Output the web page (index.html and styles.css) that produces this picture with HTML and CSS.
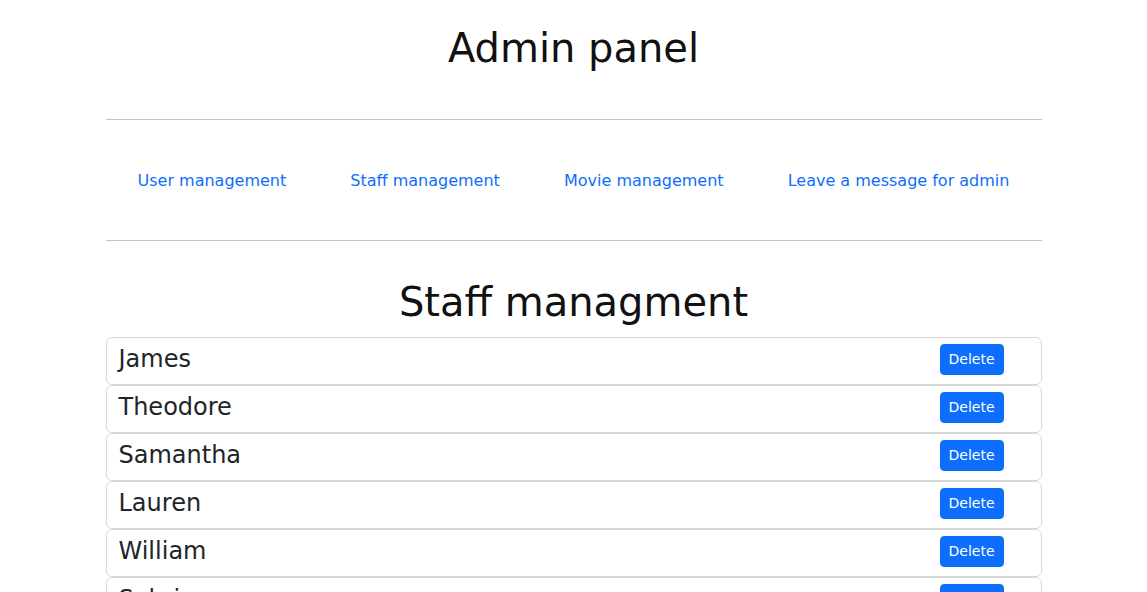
FILE: index.html
```html
<!DOCTYPE html>
<html lang="en">
<head>
<meta charset="utf-8">
<title>Admin panel</title>
<link rel="stylesheet" href="styles.css">
</head>
<body>
<div class="container">
  <h1 class="page-title">Admin panel</h1>
  <hr class="divider">
  <nav class="admin-nav">
    <a href="#" class="nav-link">User management</a>
    <a href="#" class="nav-link">Staff management</a>
    <a href="#" class="nav-link">Movie management</a>
    <a href="#" class="nav-link">Leave a message for admin</a>
  </nav>
  <hr class="divider">
  <h1 class="section-title">Staff managment</h1>
  <ul class="staff-list">
    <li class="staff-item"><h4 class="staff-name">James</h4><button class="btn-delete">Delete</button></li>
    <li class="staff-item"><h4 class="staff-name">Theodore</h4><button class="btn-delete">Delete</button></li>
    <li class="staff-item"><h4 class="staff-name">Samantha</h4><button class="btn-delete">Delete</button></li>
    <li class="staff-item"><h4 class="staff-name">Lauren</h4><button class="btn-delete">Delete</button></li>
    <li class="staff-item"><h4 class="staff-name">William</h4><button class="btn-delete">Delete</button></li>
    <li class="staff-item"><h4 class="staff-name">Sabrina</h4><button class="btn-delete">Delete</button></li>
    <li class="staff-item"><h4 class="staff-name">Oliver</h4><button class="btn-delete">Delete</button></li>
  </ul>
</div>
</body>
</html>
```

FILE: styles.css
```css
* { box-sizing: border-box; }
html, body {
  margin: 0;
  padding: 0;
  background: #fff;
}
body {
  font-family: "DejaVu Sans", sans-serif;
  font-size: 16px;
  line-height: 1.5;
  color: #212529;
}
.container {
  width: 960px;
  margin: 0 auto;
  padding: 24px 12px 0;
}
.page-title,
.section-title {
  margin: 0;
  font-size: 40px;
  font-weight: 500;
  line-height: 1.2;
  text-align: center;
  color: #111;
}
.divider {
  margin: 0;
  border: 0;
  border-top: 1px solid #c4c4c4;
}
.page-title { margin-bottom: 47px; }
.admin-nav {
  display: flex;
  justify-content: space-around;
  align-items: center;
  height: 120px;
  padding-top: 2px;
}
.nav-link {
  color: #0d6efd;
  text-decoration: none;
  line-height: 24px;
}
.section-title {
  margin-top: 37px;
  margin-bottom: 11px;
}
.staff-list {
  list-style: none;
  margin: 0;
  padding: 0;
}
.staff-item {
  display: flex;
  justify-content: space-between;
  align-items: flex-start;
  height: 48px;
  border: 1px solid #d6d9dc;
  border-radius: 6px;
  padding: 0 37px 0 12px;
}
.staff-name {
  margin: 0;
  padding-top: 7px;
  font-size: 24px;
  font-weight: 500;
  line-height: 1.2;
  color: #212529;
}
.btn-delete {
  margin-top: 6px;
  font-family: inherit;
  font-size: 14px;
  line-height: 1.5;
  padding: 4px 8px;
  color: #fff;
  background: #0d6efd;
  border: 1px solid #0d6efd;
  border-radius: 4px;
  cursor: pointer;
}
```
